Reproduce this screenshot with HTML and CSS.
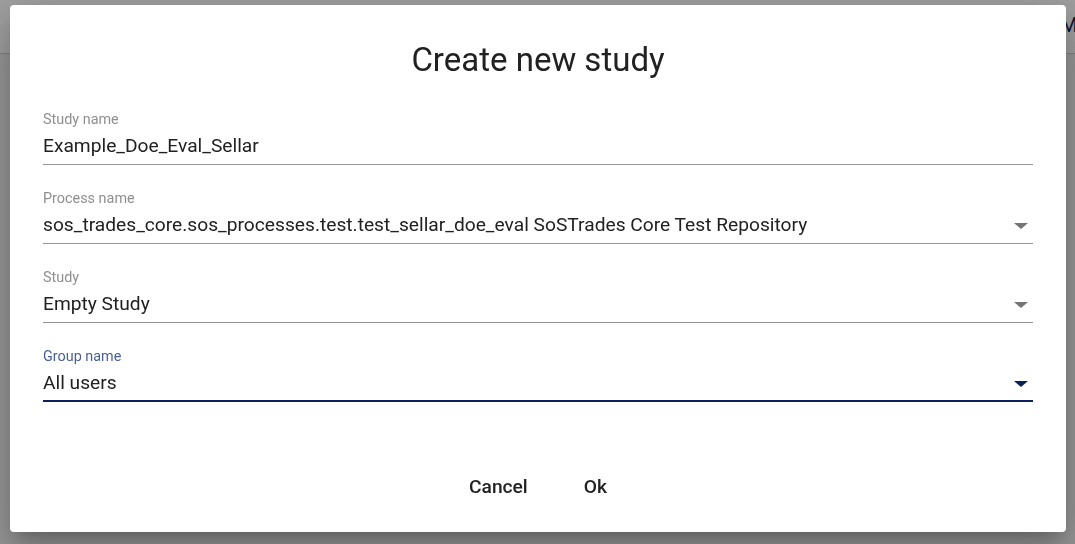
FILE: index.html
```html
<!DOCTYPE html>
<html>
<head>
<meta charset="utf-8">
<link rel="stylesheet" href="styles.css">
</head>
<body>
<div class="page">
  <header class="topbar"><span class="topbar-text">Mo</span></header>
</div>
<div class="backdrop"></div>
<div class="dialog">
  <h1 class="title">Create new study</h1>
  <div class="fields">
    <div class="field">
      <div class="label">Study name</div>
      <div class="value-row"><span class="value">Example_Doe_Eval_Sellar</span></div>
    </div>
    <div class="field">
      <div class="label">Process name</div>
      <div class="value-row"><span class="value">sos_trades_core.sos_processes.test.test_sellar_doe_eval SoSTrades Core Test Repository</span><span class="arrow"></span></div>
    </div>
    <div class="field">
      <div class="label">Study</div>
      <div class="value-row"><span class="value">Empty Study</span><span class="arrow"></span></div>
    </div>
    <div class="field focused">
      <div class="label">Group name</div>
      <div class="value-row"><span class="value">All users</span><span class="arrow"></span></div>
    </div>
  </div>
  <div class="actions">
    <button class="btn">Cancel</button>
    <button class="btn">Ok</button>
  </div>
</div>
</body>
</html>
```
FILE: styles.css
```css
* { box-sizing: border-box; }
html, body { margin: 0; padding: 0; }
body {
  width: 1075px;
  height: 544px;
  overflow: hidden;
  background: #f2f2f2;
  font-family: Roboto, "Liberation Sans", sans-serif;
}
.page { height: 544px; }
.topbar {
  height: 54px;
  border-bottom: 1px solid #d0d0d0;
  background: #fff;
  display: flex;
  justify-content: flex-end;
  align-items: center;
}
.topbar-text {
  font-size: 20px;
  color: #0a2259;
  margin-right: -14px;
  padding-bottom: 4px;
}
.backdrop {
  position: fixed;
  inset: 0;
  background: rgba(0, 0, 0, 0.38);
}
.dialog {
  position: fixed;
  left: 10px;
  top: 5px;
  width: 1056px;
  height: 527px;
  background: #fff;
  border-radius: 4px;
  box-shadow: 0 11px 15px -7px rgba(0,0,0,.2), 0 24px 38px 3px rgba(0,0,0,.14), 0 9px 46px 8px rgba(0,0,0,.12);
  padding: 35px 33px 28px;
  display: flex;
  flex-direction: column;
}
.title {
  margin: 0;
  font-size: 33px;
  line-height: 40px;
  font-weight: 400;
  text-align: center;
  color: #212121;
}
.fields {
  margin-top: 32px;
  display: flex;
  flex-direction: column;
  gap: 26px;
}
.field {
  border-bottom: 1px solid #949494;
  padding-bottom: 6px;
}
.label {
  font-size: 14.4px;
  line-height: 16px;
  color: #8f8f8f;
}
.value-row {
  margin-top: 6px;
  height: 24px;
  display: flex;
  align-items: center;
  justify-content: space-between;
}
.value {
  font-size: 19.2px;
  line-height: 24px;
  color: #212121;
}
.arrow {
  width: 0;
  height: 0;
  border-left: 7px solid transparent;
  border-right: 7px solid transparent;
  border-top: 6px solid #757575;
  margin-right: 5px;
  margin-top: 2px;
}
.field.focused {
  border-bottom: 2px solid #0b2157;
  padding-bottom: 5px;
}
.field.focused .label { color: #4a5f94; }
.field.focused .arrow { border-top-color: #0b2157; }
.actions {
  margin-top: auto;
  display: flex;
  justify-content: center;
  gap: 24px;
}
.btn {
  font-family: Roboto, "Liberation Sans", sans-serif;
  font-size: 19.2px;
  font-weight: 500;
  color: #212121;
  background: transparent;
  border: none;
  height: 36px;
  padding: 0 16px;
  border-radius: 4px;
}
```
